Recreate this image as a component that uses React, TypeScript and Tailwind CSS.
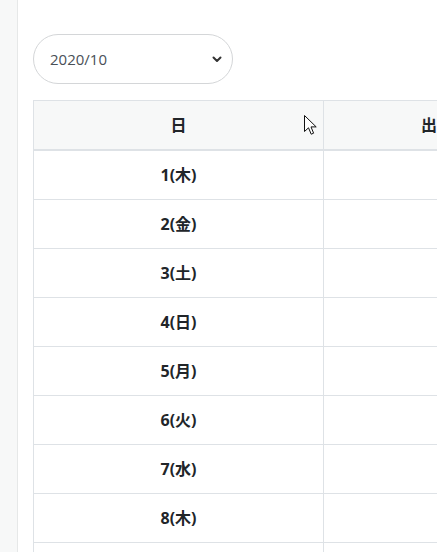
import React from 'react';

const weekdays = ['日', '月', '火', '水', '木', '金', '土'];

// 2020/10/1 was a Thursday
const days = Array.from({ length: 31 }, (_, i) => `${i + 1}(${weekdays[(i + 4) % 7]})`);

function Chevron() {
  return (
    <svg width="10" height="7" viewBox="0 0 10 7" className="text-[#333]">
      <path d="M1.5 1.5 L5 5 L8.5 1.5" fill="none" stroke="currentColor" strokeWidth="2" strokeLinecap="round" strokeLinejoin="round" />
    </svg>
  );
}

function Cursor() {
  return (
    <svg width="13" height="21" viewBox="0 0 13 21" className="absolute left-[304px] top-[115px]">
      <path d="M0.5 0.5 L0.5 16.5 L4.5 12.8 L7.2 19.2 L9.6 18.2 L7 11.9 L12.2 11.9 Z" fill="#fff" stroke="#111" strokeWidth="1" strokeLinejoin="round" />
    </svg>
  );
}

export default function App() {
  return (
    <div className="relative flex h-[552px] w-[437px] overflow-hidden bg-white" style={{ fontFamily: '"Open Sans", "Noto Sans CJK JP", sans-serif' }}>
      <div className="w-[18px] shrink-0 border-r border-[#e6e8e8] bg-[#f7f8f8]" />
      <div className="min-w-0 flex-1 pl-[15px] pt-[34px]">
        <div className="flex h-[50px] w-[200px] items-center justify-between rounded-full border border-[#d4d6d8] pl-[16px] pr-[10px] text-[15px] text-[#495057]">
          <span>2020/10</span>
          <Chevron />
        </div>

        <div className="mt-[16px] w-[520px] border-l border-t border-[#dee2e6] text-[16px] font-bold text-[#212529]">
          <div className="flex h-[50px] border-b-2 border-[#dee2e6] bg-[#f7f8f8]">
            <div className="flex w-[290px] shrink-0 items-center justify-center border-r border-[#dee2e6]">日</div>
            <div className="flex w-[226px] shrink-0 items-center justify-center">出勤</div>
          </div>
          {days.map((d) => (
            <div key={d} className="flex h-[49px] border-b border-[#dee2e6]">
              <div className="flex w-[290px] shrink-0 items-center justify-center border-r border-[#dee2e6]">{d}</div>
              <div className="w-[226px] shrink-0" />
            </div>
          ))}
        </div>
      </div>
      <Cursor />
    </div>
  );
}
